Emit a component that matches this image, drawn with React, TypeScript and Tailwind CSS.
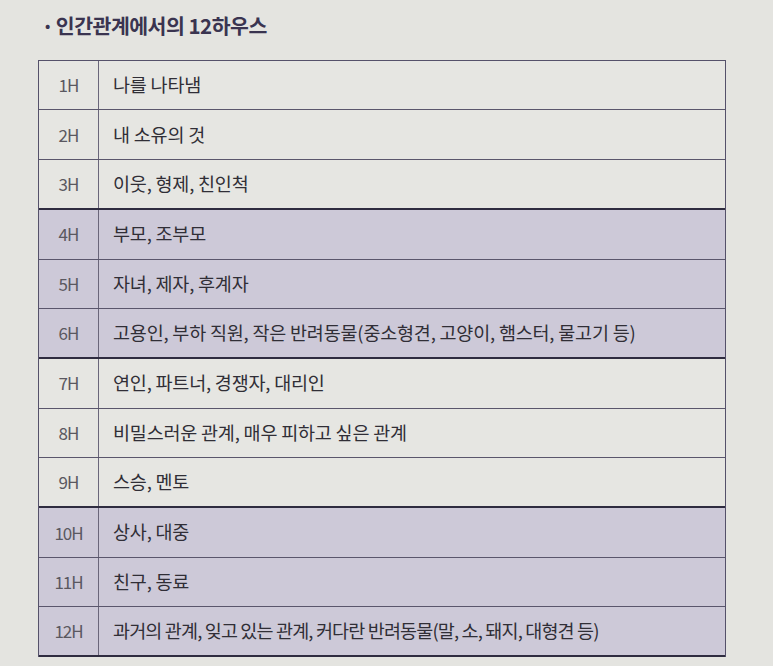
const rows: { label: string; text: string; shaded: boolean; thick?: boolean; tight?: boolean }[] = [
  { label: '1H', text: '나를 나타냄', shaded: false },
  { label: '2H', text: '내 소유의 것', shaded: false },
  { label: '3H', text: '이웃, 형제, 친인척', shaded: false, thick: true },
  { label: '4H', text: '부모, 조부모', shaded: true },
  { label: '5H', text: '자녀, 제자, 후계자', shaded: true },
  { label: '6H', text: '고용인, 부하 직원, 작은 반려동물(중소형견, 고양이, 햄스터, 물고기 등)', shaded: true, thick: true },
  { label: '7H', text: '연인, 파트너, 경쟁자, 대리인', shaded: false },
  { label: '8H', text: '비밀스러운 관계, 매우 피하고 싶은 관계', shaded: false },
  { label: '9H', text: '스승, 멘토', shaded: false, thick: true },
  { label: '10H', text: '상사, 대중', shaded: true },
  { label: '11H', text: '친구, 동료', shaded: true },
  { label: '12H', text: '과거의 관계, 잊고 있는 관계, 커다란 반려동물(말, 소, 돼지, 대형견 등)', shaded: true, thick: true, tight: true },
];

export default function App() {
  return (
    <div
      className="h-[666px] w-[773px] overflow-hidden bg-[#e4e4e0] pt-[10px]"
      style={{ fontFamily: '"Noto Sans CJK KR", "Noto Sans", sans-serif' }}
    >
      <h2 className="ml-[45px] flex items-center gap-[6px] text-[20.5px] font-bold tracking-[-0.5px] text-[#3a3450]">
        <span className="text-[14px]">•</span>
        인간관계에서의 12하우스
      </h2>

      <div className="ml-[38px] mt-[19px] w-[688px] border-l border-r border-t border-[#55516a]">
        {rows.map((row) => (
          <div
            key={row.label}
            className={`flex h-[49.7px] ${row.thick ? 'border-b-2 border-[#2f2c40]' : 'border-b border-[#5a566c]'} ${
              row.shaded ? 'bg-[#cdc9d8]' : 'bg-[#e6e6e2]'
            }`}
          >
            <div className="flex w-[60px] shrink-0 items-center justify-center border-r border-[#6a667a] text-[17px] tracking-[-1px] text-[#5a5860]">
              {row.label}
            </div>
            <div
              className={`flex items-center pl-[14px] text-[18.5px] text-[#302e36] ${
                row.tight ? 'tracking-[-0.85px]' : 'tracking-[-0.2px]'
              }`}
            >
              {row.text}
            </div>
          </div>
        ))}
      </div>
    </div>
  );
}
